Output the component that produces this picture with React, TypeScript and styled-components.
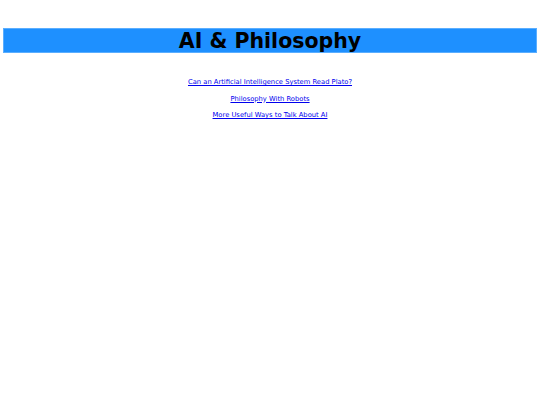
import React from 'react';
import styled, { createGlobalStyle } from 'styled-components';

const GlobalStyle = createGlobalStyle`
  html, body {
    margin: 0;
    padding: 0;
    background: #fff;
  }
  body {
    font-family: "DejaVu Sans", Verdana, sans-serif;
  }
`;

const Page = styled.div`
  padding: 28px 3px 0;
`;

const Banner = styled.header`
  background-color: #1e90ff;
  border: 1px solid #5aaeff;
  height: 23px;
  display: flex;
  align-items: center;
  justify-content: center;
`;

const Title = styled.h1`
  margin: 2px 0 0;
  font-size: 20.5px;
  font-weight: 700;
  color: #000;
  line-height: 1;
`;

const LinkList = styled.nav`
  display: flex;
  flex-flow: column;
  align-items: center;
  gap: 6.5px;
  margin-top: 24px;
`;

const ArticleLink = styled.a`
  font-size: 6.75px;
  line-height: 10px;
  color: #0000ee;
  text-decoration: underline;
`;

const articles = [
  'Can an Artificial Intelligence System Read Plato?',
  'Philosophy With Robots',
  'More Useful Ways to Talk About AI',
];

const App = () => (
  <>
    <GlobalStyle />
    <Page>
      <Banner>
        <Title>AI &amp; Philosophy</Title>
      </Banner>
      <LinkList>
        {articles.map((title) => (
          <ArticleLink key={title} href="#">
            {title}
          </ArticleLink>
        ))}
      </LinkList>
    </Page>
  </>
);

export default App;
